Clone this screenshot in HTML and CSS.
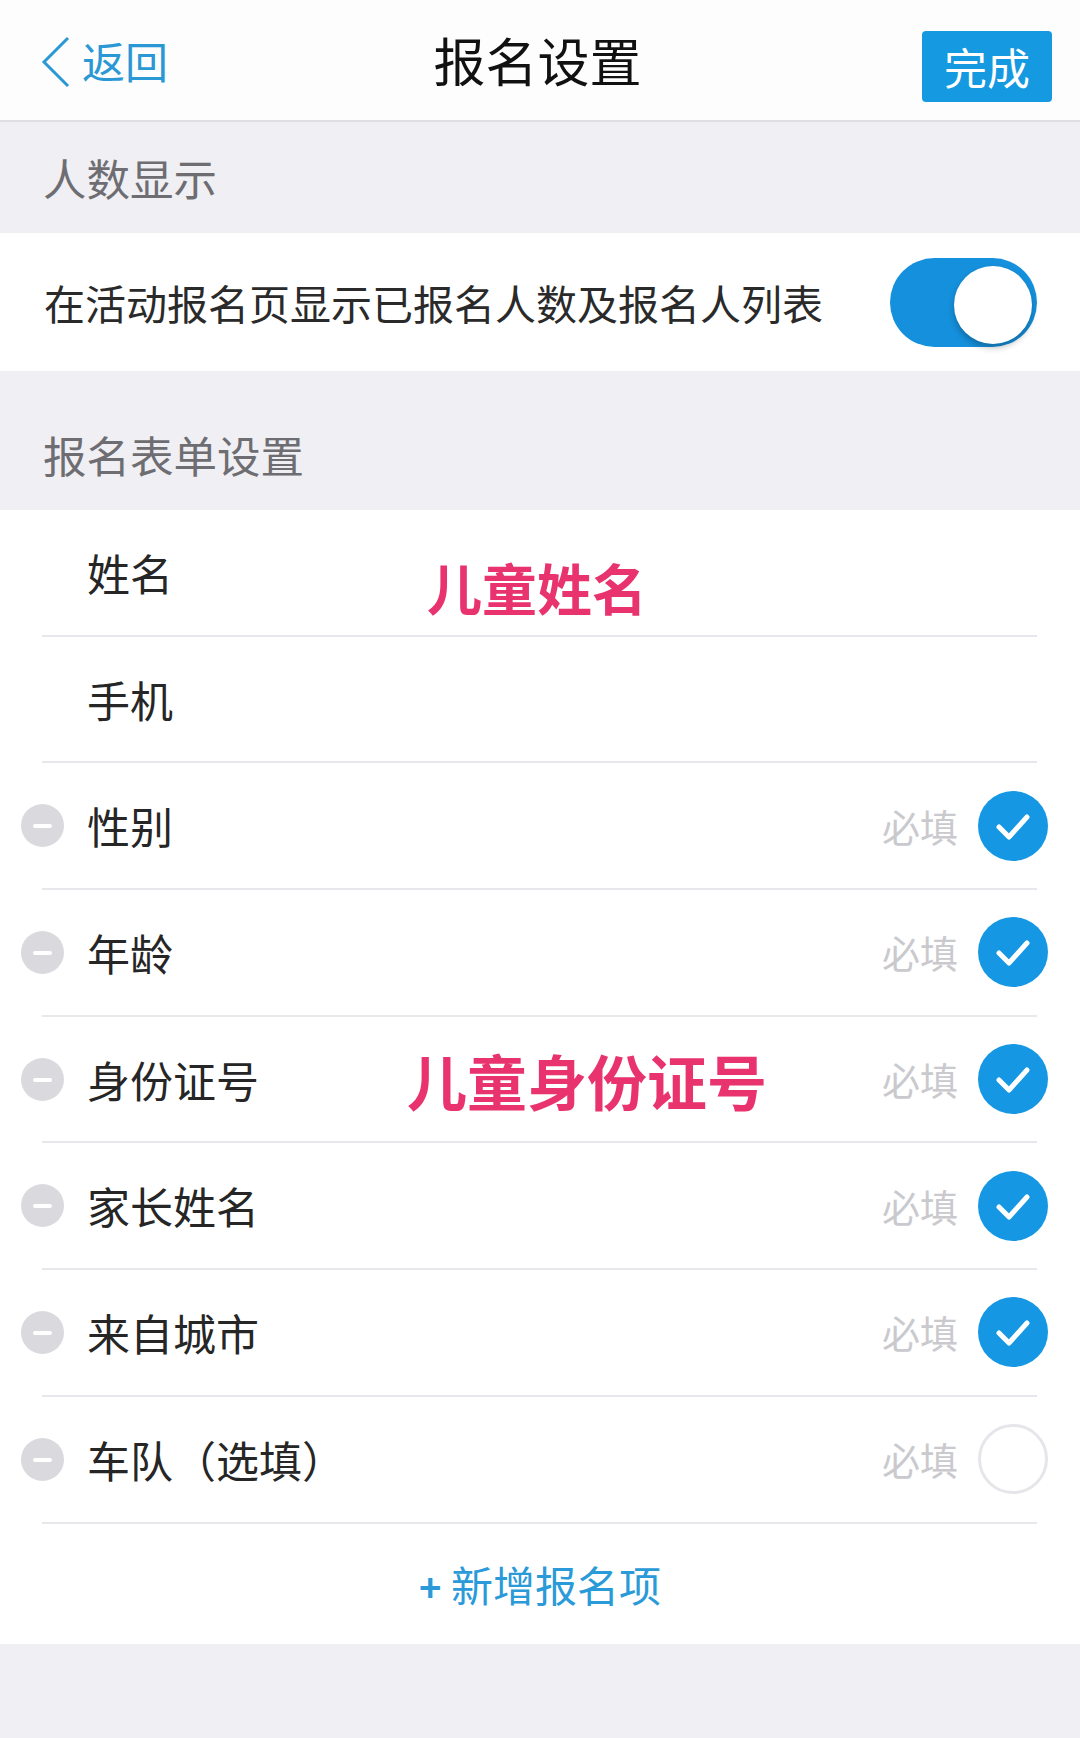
FILE: index.html
```html
<!DOCTYPE html>
<html lang="zh-CN">
<head>
    <meta charset="UTF-8">
    <meta name="viewport" content="width=device-width, initial-scale=1.0">
    <title>报名设置</title>
    <link rel="stylesheet" href="styles.css">
</head>
<body>
    <header class="nav">
        <a class="back" href="#">
            <svg class="back-icon" width="30" height="52" viewBox="0 0 30 52">
                <polyline points="27,2 3,26 27,50" fill="none" stroke="#2b98d6" stroke-width="3"/>
            </svg>
            <span>返回</span>
        </a>
        <h1 class="title">报名设置</h1>
        <div class="nav-right">
            <button class="done" type="button">完成</button>
        </div>
    </header>

    <div class="section-head">人数显示</div>
    <div class="toggle-row">
        <span class="toggle-text">在活动报名页显示已报名人数及报名人列表</span>
        <div class="switch on">
            <div class="knob"></div>
        </div>
    </div>

    <div class="section-head tall">报名表单设置</div>
    <ul class="form-list">
        <li class="field fixed">
            <span class="label">姓名</span>
            <span class="note note-name">儿童姓名</span>
        </li>
        <li class="field fixed">
            <span class="label">手机</span>
        </li>
        <li class="field">
            <span class="minus"></span>
            <span class="label">性别</span>
            <span class="req">必填</span>
            <span class="check on"><svg width="70" height="70" viewBox="0 0 70 70"><polyline points="21,36 31,46 49,26" fill="none" stroke="#fff" stroke-width="5" stroke-linecap="round" stroke-linejoin="round"/></svg></span>
        </li>
        <li class="field">
            <span class="minus"></span>
            <span class="label">年龄</span>
            <span class="req">必填</span>
            <span class="check on"><svg width="70" height="70" viewBox="0 0 70 70"><polyline points="21,36 31,46 49,26" fill="none" stroke="#fff" stroke-width="5" stroke-linecap="round" stroke-linejoin="round"/></svg></span>
        </li>
        <li class="field">
            <span class="minus"></span>
            <span class="label">身份证号</span>
            <span class="note note-id">儿童身份证号</span>
            <span class="req">必填</span>
            <span class="check on"><svg width="70" height="70" viewBox="0 0 70 70"><polyline points="21,36 31,46 49,26" fill="none" stroke="#fff" stroke-width="5" stroke-linecap="round" stroke-linejoin="round"/></svg></span>
        </li>
        <li class="field">
            <span class="minus"></span>
            <span class="label">家长姓名</span>
            <span class="req">必填</span>
            <span class="check on"><svg width="70" height="70" viewBox="0 0 70 70"><polyline points="21,36 31,46 49,26" fill="none" stroke="#fff" stroke-width="5" stroke-linecap="round" stroke-linejoin="round"/></svg></span>
        </li>
        <li class="field">
            <span class="minus"></span>
            <span class="label">来自城市</span>
            <span class="req">必填</span>
            <span class="check on"><svg width="70" height="70" viewBox="0 0 70 70"><polyline points="21,36 31,46 49,26" fill="none" stroke="#fff" stroke-width="5" stroke-linecap="round" stroke-linejoin="round"/></svg></span>
        </li>
        <li class="field">
            <span class="minus"></span>
            <span class="label">车队（选填）</span>
            <span class="req">必填</span>
            <span class="check"></span>
        </li>
    </ul>
    <div class="add-row">
        <a class="add" href="#"><span class="plus">+</span> 新增报名项</a>
    </div>
</body>
</html>
```

FILE: styles.css
```css
body {
    margin: 0;
    padding: 0;
    background-color: #efeff4;
    font-family: "Noto Sans CJK SC", "Noto Sans", sans-serif;
    color: #262626;
}
a {
    text-decoration: none;
}

/* top bar */
.nav {
    display: grid;
    grid-template-columns: 1fr auto 1fr;
    align-items: center;
    height: 120px;
    padding: 0 28px 0 41px;
    background: #fdfdfd;
    border-bottom: 2px solid #dfdfe3;
}
.back {
    display: flex;
    align-items: center;
    gap: 11px;
    color: #2b98d6;
    font-size: 43px;
    line-height: 1;
}
.back-icon {
    display: block;
    margin-top: 4px;
}
.title {
    margin: 0;
    padding-right: 18px;
    font-size: 52px;
    font-weight: 400;
    color: #111;
    line-height: 1;
}
.nav-right {
    display: flex;
    justify-content: flex-end;
    padding-top: 12px;
}
.done {
    width: 130px;
    height: 71px;
    border: none;
    border-radius: 4px;
    background: #1599e0;
    color: #fff;
    font-family: inherit;
    font-size: 43px;
    line-height: 1;
    padding: 0;
}

/* section headers */
.section-head {
    display: flex;
    align-items: center;
    height: 111px;
    padding-left: 43px;
    font-size: 43.5px;
    line-height: 50px;
    color: #6d6d72;
}
.section-head.tall {
    align-items: flex-start;
    height: 80px;
    padding-top: 59px;
}

/* toggle row */
.toggle-row {
    display: flex;
    align-items: center;
    justify-content: space-between;
    height: 138px;
    padding: 0 43px 0 44px;
    background: #fff;
}
.toggle-text {
    font-size: 41px;
    line-height: 1;
    color: #2a2a2a;
}
.switch {
    display: flex;
    align-items: center;
    justify-content: flex-end;
    box-sizing: border-box;
    width: 147px;
    height: 89px;
    padding: 0 5px;
    border-radius: 45px;
    background: #1590dc;
}
.knob {
    width: 78px;
    height: 78px;
    margin-top: 6px;
    border-radius: 50%;
    background: #fff;
    box-shadow: 0 4px 6px rgba(0, 0, 0, 0.25);
}

/* form field list */
.form-list {
    list-style: none;
    margin: 0;
    padding: 0 43px 0 42px;
    background: #fff;
}
.field {
    position: relative;
    display: flex;
    align-items: center;
    height: 124.7px;
    border-bottom: 2px solid #e8e8ec;
}
.field.fixed {
    padding-left: 45px;
}
.minus {
    position: relative;
    flex: none;
    width: 43px;
    height: 43px;
    margin-left: -21px;
    margin-right: 23px;
    border-radius: 50%;
    background: #dadade;
}
.minus::after {
    content: "";
    position: absolute;
    left: 12px;
    top: 20px;
    width: 19px;
    height: 4px;
    border-radius: 2px;
    background: #fff;
}
.label {
    font-size: 43px;
    line-height: 1;
    color: #262626;
}
.req {
    margin-left: auto;
    font-size: 38px;
    line-height: 1;
    color: #c9c9ce;
}
.check {
    flex: none;
    box-sizing: border-box;
    width: 70px;
    height: 70px;
    margin-left: 20px;
    margin-right: -11px;
    border-radius: 50%;
    border: 3px solid #e6e6ea;
    background: #fff;
}
.check.on {
    border: none;
    background: #1597e3;
}
.check svg {
    display: block;
}

/* pink annotations laid over the list */
.note {
    position: absolute;
    font-weight: 700;
    color: #e8336f;
    line-height: 1;
    text-shadow: 0 0 3px #fff;
}
.note-name {
    left: 385px;
    top: 49px;
    font-size: 55px;
}
.note-id {
    left: 365px;
    top: 33px;
    font-size: 60px;
}

/* add item */
.add-row {
    display: flex;
    justify-content: center;
    align-items: center;
    height: 120px;
    background: #fff;
}
.add {
    font-size: 42px;
    line-height: 1;
    color: #2a9ad8;
}
.plus {
    font-weight: 700;
    font-size: 38px;
}
```
